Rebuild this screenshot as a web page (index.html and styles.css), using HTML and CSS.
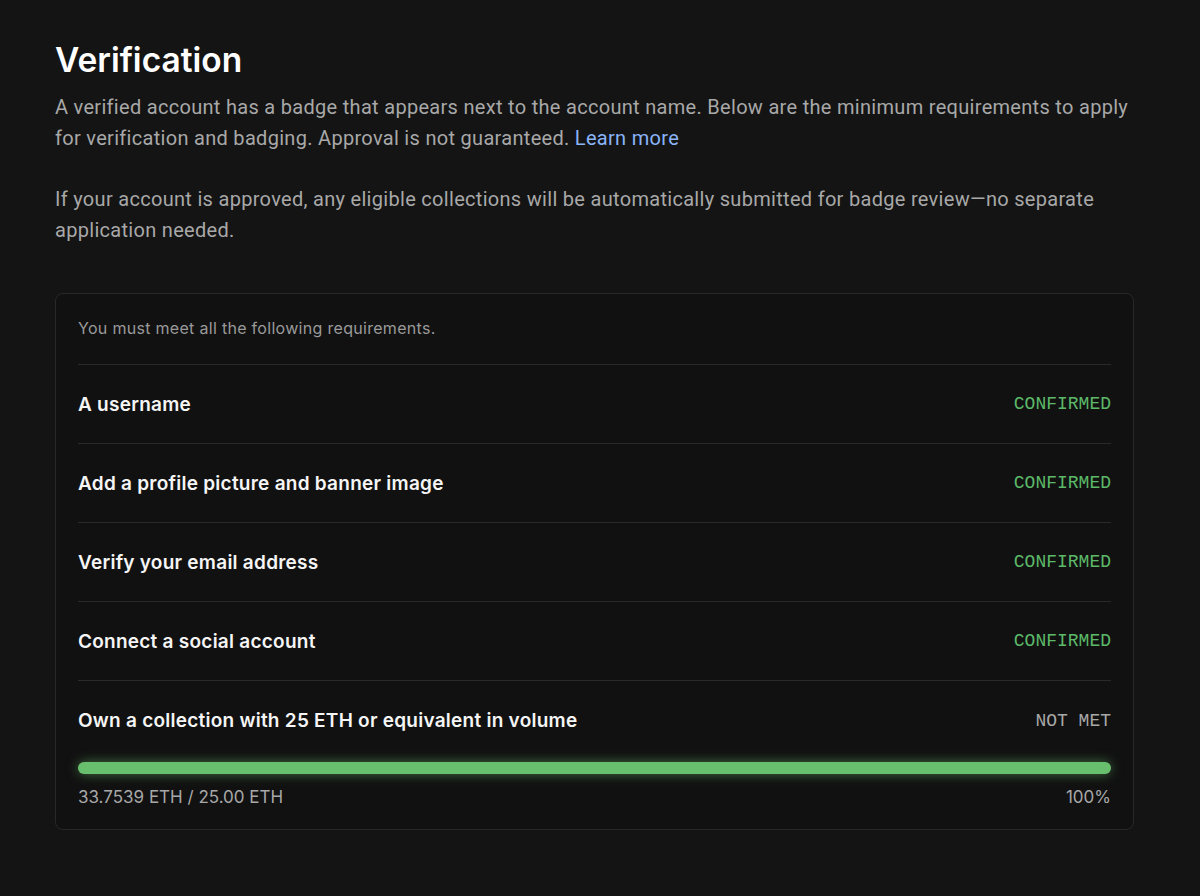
FILE: index.html
```html
<!DOCTYPE html>
<html lang="en">
<head>
  <meta charset="UTF-8">
  <meta name="viewport" content="width=device-width, initial-scale=1.0">
  <title>Verification</title>
  <link rel="stylesheet" href="styles.css">
</head>
<body>

<div class="page">
  <h1 class="title">Verification</h1>
  <p class="intro">A verified account has a badge that appears next to the account name. Below are the minimum requirements to apply for verification and badging. Approval is not guaranteed. <a href="#" class="link">Learn more</a></p>
  <p class="intro">If your account is approved, any eligible collections will be automatically submitted for badge review&mdash;no separate application needed.</p>

  <div class="card">
    <div class="card-note">You must meet all the following requirements.</div>

    <div class="req">
      <span class="req-name">A username</span>
      <span class="status ok">CONFIRMED</span>
    </div>
    <div class="req">
      <span class="req-name">Add a profile picture and banner image</span>
      <span class="status ok">CONFIRMED</span>
    </div>
    <div class="req">
      <span class="req-name">Verify your email address</span>
      <span class="status ok">CONFIRMED</span>
    </div>
    <div class="req">
      <span class="req-name">Connect a social account</span>
      <span class="status ok">CONFIRMED</span>
    </div>
    <div class="req req-last">
      <div class="req-top">
        <span class="req-name">Own a collection with 25 ETH or equivalent in volume</span>
        <span class="status">NOT MET</span>
      </div>
      <div class="bar"><div class="bar-fill" style="width: 100%"></div></div>
      <div class="bar-labels">
        <span>33.7539 ETH / 25.00 ETH</span>
        <span>100%</span>
      </div>
    </div>
  </div>
</div>

</body>
</html>
```

FILE: styles.css
```css
body {
  margin: 0;
  background-color: #141414;
  color: #ffffff;
  font-family: Roboto, "Liberation Sans", sans-serif;
}

.page {
  width: 1079px;
  padding: 36px 0 0 55px;
}

.title {
  margin: 0 0 8px 0;
  font-family: Inter, sans-serif;
  font-size: 33.5px;
  font-weight: 600;
  line-height: 48px;
}

.intro {
  margin: 0 0 30px 0;
  font-size: 20px;
  line-height: 31px;
  letter-spacing: 0.3px;
  color: #a8a8a8;
}

.link {
  color: #8ab4f8;
  text-decoration: none;
}

.card {
  margin-top: 47px;
  background-color: #111111;
  border: 1px solid #282828;
  border-radius: 8px;
  padding: 24px 22px 22px 22px;
}

.card-note {
  font-family: Inter, sans-serif;
  font-size: 16px;
  letter-spacing: 0.3px;
  color: #9a9a9a;
  padding-bottom: 26px;
  border-bottom: 1px solid #2a2a2a;
}

.req {
  display: flex;
  justify-content: space-between;
  align-items: center;
  height: 78px;
  border-bottom: 1px solid #2a2a2a;
}

.req-name {
  font-family: Inter, sans-serif;
  font-size: 19px;
  font-weight: 600;
  letter-spacing: 0.25px;
  color: #f5f5f5;
}

.status {
  font-family: "Liberation Mono", monospace;
  font-size: 18px;
  color: #a8a8a8;
}

.status.ok {
  color: #5cb968;
}

.req-last {
  display: block;
  height: auto;
  border-bottom: none;
}

.req-top {
  display: flex;
  justify-content: space-between;
  align-items: center;
  padding-top: 28px;
}

.bar {
  margin-top: 30px;
  height: 12px;
  border-radius: 6px;
  background-color: #2a2a2a;
}

.bar-fill {
  height: 12px;
  border-radius: 6px;
  background-color: #68bf6d;
  box-shadow: 0 0 12px rgba(104, 191, 109, 0.55);
}

.bar-labels {
  display: flex;
  justify-content: space-between;
  margin-top: 13px;
  font-family: Inter, sans-serif;
  font-size: 17px;
  color: #a8a8a8;
}
```
